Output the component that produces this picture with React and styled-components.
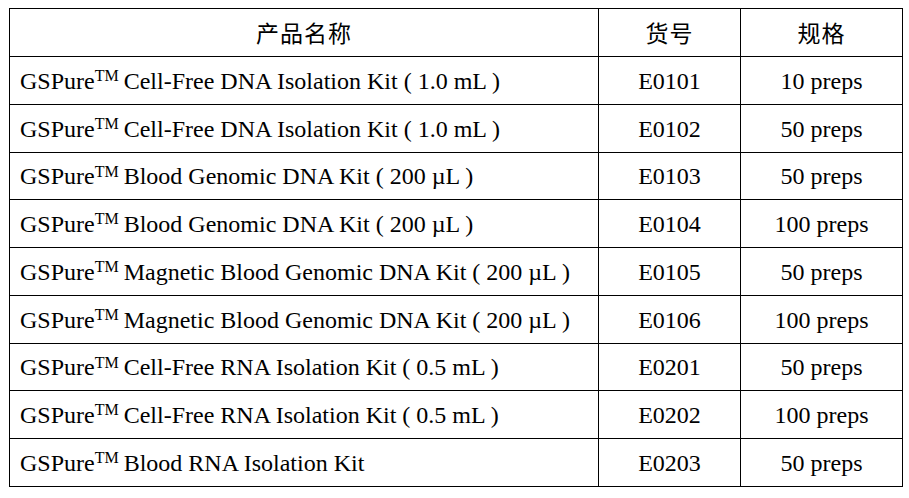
import React from 'react';
import styled, { createGlobalStyle } from 'styled-components';

const GlobalStyle = createGlobalStyle`
  html, body {
    margin: 0;
    padding: 0;
    background: #ffffff;
  }
`;

const Page = styled.div`
  padding: 8px 0 0 9px;
  color: #000;
`;

const Table = styled.table`
  border-collapse: collapse;
  table-layout: fixed;
  width: 894px;
`;

const Cell = styled.td`
  border: 1px solid #000;
  height: ${(p) => p.$h - 1}px;
  padding: 0 0 0 ${(p) => (p.$left ? 10 : 0)}px;
  text-align: ${(p) => (p.$left ? 'left' : 'center')};
  vertical-align: middle;
  font-family: "Liberation Serif", "Times New Roman", serif;
  font-size: 24px;
  line-height: 1;
  white-space: nowrap;
  color: #000;
`;

const HeadCell = styled(Cell).attrs({ as: 'th' })`
  font-weight: normal;
  font-family: "Noto Sans CJK SC", "Liberation Serif", sans-serif;
  font-size: 23px;
  letter-spacing: 1px;
  text-align: center;
  padding: 0;
`;

const Tm = styled.sup`
  font-size: 16px;
  line-height: 0;
  vertical-align: 0.45em;
  margin-right: 5px;
`;

const rows = [
  ['Cell-Free DNA Isolation Kit ( 1.0 mL )', 'E0101', '10 preps', 48],
  ['Cell-Free DNA Isolation Kit ( 1.0 mL )', 'E0102', '50 preps', 48],
  ['Blood Genomic DNA Kit ( 200 µL )', 'E0103', '50 preps', 47],
  ['Blood Genomic DNA Kit ( 200 µL )', 'E0104', '100 preps', 48],
  ['Magnetic Blood Genomic DNA Kit ( 200 µL )', 'E0105', '50 preps', 48],
  ['Magnetic Blood Genomic DNA Kit ( 200 µL )', 'E0106', '100 preps', 48],
  ['Cell-Free RNA Isolation Kit ( 0.5 mL )', 'E0201', '50 preps', 47],
  ['Cell-Free RNA Isolation Kit ( 0.5 mL )', 'E0202', '100 preps', 48],
  ['Blood RNA Isolation Kit', 'E0203', '50 preps', 48],
];

const App = () => {
  return (
    <>
      <GlobalStyle />
      <Page>
        <Table>
          <colgroup>
            <col style={{ width: 589 }} />
            <col style={{ width: 142 }} />
            <col style={{ width: 162 }} />
          </colgroup>
          <thead>
            <tr>
              <HeadCell $h={48}>产品名称</HeadCell>
              <HeadCell $h={48}>货号</HeadCell>
              <HeadCell $h={48}>规格</HeadCell>
            </tr>
          </thead>
          <tbody>
            {rows.map(([name, code, size, h], i) => (
              <tr key={i}>
                <Cell $left $h={h}>
                  GSPure<Tm>TM</Tm>{name}
                </Cell>
                <Cell $h={h}>{code}</Cell>
                <Cell $h={h}>{size}</Cell>
              </tr>
            ))}
          </tbody>
        </Table>
      </Page>
    </>
  );
};

export default App;
